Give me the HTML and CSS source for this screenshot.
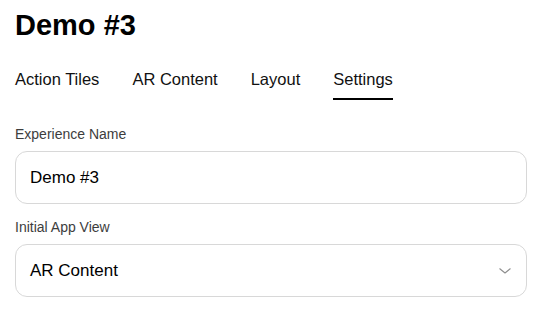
FILE: index.html
```html
<!DOCTYPE html>
<html>
<head>
<meta charset="utf-8">
<link rel="stylesheet" href="styles.css">
</head>
<body>
<div class="page">
  <h1 class="title">Demo #3</h1>
  <nav class="tabs">
    <div class="tab">Action Tiles</div>
    <div class="tab">AR Content</div>
    <div class="tab">Layout</div>
    <div class="tab active">Settings</div>
  </nav>
  <div class="group">
    <div class="label">Experience Name</div>
    <div class="field">Demo #3</div>
  </div>
  <div class="group second">
    <div class="label">Initial App View</div>
    <div class="field select">
      <span>AR Content</span>
      <svg class="chev" width="12" height="6" viewBox="0 0 12 6"><path d="M0.8 0.8 L6 5 L11.2 0.8" fill="none" stroke="#8e8e8e" stroke-width="1.1" stroke-linecap="round" stroke-linejoin="round"/></svg>
    </div>
  </div>
</div>
</body>
</html>
```
FILE: styles.css
```css
html, body {
  margin: 0;
  padding: 0;
  background: #fff;
}
body {
  font-family: "Liberation Sans", Arial, sans-serif;
  color: #000;
}
.page {
  padding: 8px 13px 0 15px;
}
.title {
  margin: 0;
  font-size: 29px;
  line-height: 35px;
  font-weight: 700;
  color: #000;
}
.tabs {
  display: flex;
  gap: 33px;
  margin-top: 26px;
}
.tab {
  font-size: 16.5px;
  line-height: 20px;
  color: #111;
  padding-bottom: 9px;
  border-bottom: 2px solid transparent;
}
.tab.active {
  border-bottom-color: #000;
}
.group {
  margin-top: 26px;
}
.group.second {
  margin-top: 15px;
}
.label {
  font-size: 14px;
  line-height: 17px;
  color: #3d3d3d;
  margin-bottom: 8px;
}
.field {
  box-sizing: border-box;
  height: 53px;
  border: 1px solid #d8d8d8;
  border-radius: 12px;
  padding: 0 15px 0 14px;
  display: flex;
  align-items: center;
  font-size: 17px;
  color: #000;
}
.select {
  justify-content: space-between;
}
.chev {
  display: block;
  margin-top: 1px;
}
```
